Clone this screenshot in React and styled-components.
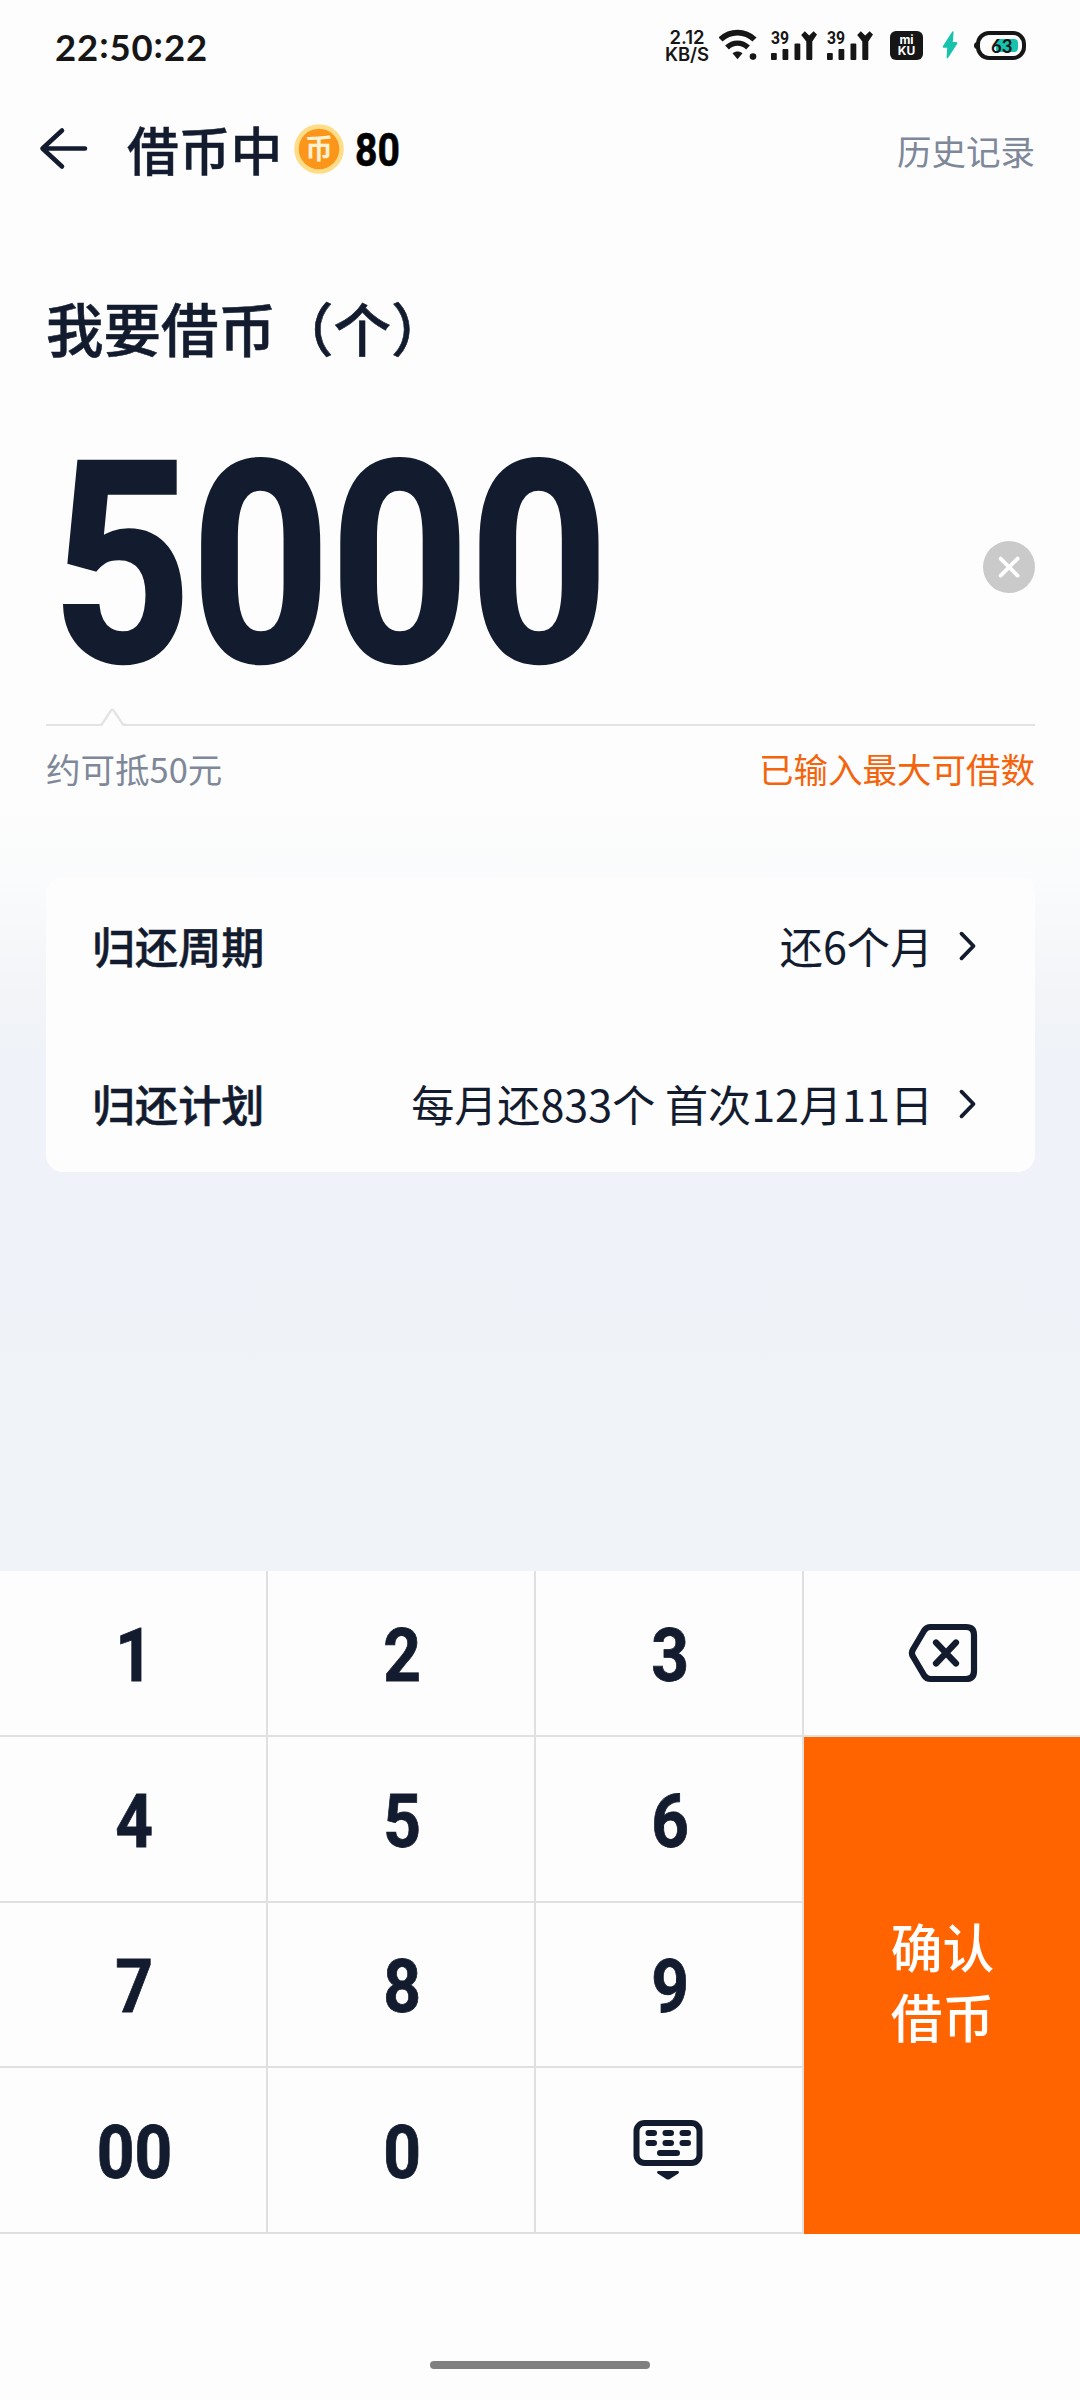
import React, { useState } from "react";
import styled, { createGlobalStyle } from "styled-components";

const INK = "#131c2f";
const CJK = '"Noto Sans CJK SC", "Noto Sans", sans-serif';
const DIGITS = 'Roboto, "Noto Sans", sans-serif';

const ROWS = [
    { label: "归还周期", value: "还6个月" },
    { label: "归还计划", value: "每月还833个 首次12月11日" },
];

const MAX_AMOUNT = 5000;

const SignalIcon = () => (
    <Signal>
        <svg width="46" height="32" viewBox="0 0 46 32" fill="#161616">
            <rect x="0" y="24" width="5.8" height="7" rx="1" />
            <rect x="11.5" y="20" width="5.8" height="11" rx="1" />
            <rect x="23.5" y="14.5" width="5.8" height="16.5" rx="1" />
            <path d="M35.3 30V12.5L30.2 6L33.8 2.2L38.2 6.4L42.6 2.2L46 5.6L41.3 12.5V30a1 1 0 0 1-1 1h-4a1 1 0 0 1-1-1z" />
        </svg>
        <SignalLabel>39</SignalLabel>
    </Signal>
);

const WifiIcon = () => (
    <svg width="40" height="32" viewBox="0 0 40 32" fill="none" stroke="#161616">
        <path d="M1.5 10.5C11 1.2 26 1.2 35.5 10.5" strokeWidth="5.8" />
        <path d="M8 18.5C14 12.6 23 12.6 29 18.5" strokeWidth="5.4" />
        <path d="M13.5 24.2C16.5 21.8 20.5 21.8 23.5 24.2L18.5 30.3z" fill="#161616" stroke="none" />
        <circle cx="34" cy="27.6" r="3.3" fill="#161616" stroke="none" />
    </svg>
);

const CoinIcon = () => (
    <svg width="50" height="50" viewBox="0 0 50 50">
        <circle cx="25" cy="25" r="24.8" fill="#ffdd88" />
        <circle cx="25" cy="25" r="20.3" fill="#fb961a" />
        <text x="25" y="35" textAnchor="middle" fontSize="28" fontWeight="700" fontFamily="Noto Sans CJK SC" fill="#fff1d2">币</text>
    </svg>
);

const BackIcon = () => (
    <svg width="50" height="44" viewBox="0 0 50 44" fill="none" stroke={INK} strokeWidth="4.6" strokeLinecap="round" strokeLinejoin="round">
        <path d="M24 3.5L4.5 21.5L24 39.5M5 21.5H47" />
    </svg>
);

const ClearIcon = () => (
    <svg width="52" height="52" viewBox="0 0 52 52">
        <circle cx="26" cy="26" r="26" fill="#cacaca" />
        <path d="M17.6 17.6L34.6 34.6M34.6 17.6L17.6 34.6" stroke="#fff" strokeWidth="3.8" strokeLinecap="round" />
    </svg>
);

const ChevronIcon = () => (
    <svg width="20" height="32" viewBox="0 0 20 32" fill="none" stroke={INK} strokeWidth="3.8" strokeLinecap="round" strokeLinejoin="round">
        <path d="M3.5 3.7L15.5 16L3.5 28.3" />
    </svg>
);

const DeleteIcon = () => (
    <svg width="70" height="60" viewBox="0 0 70 60" fill="none" stroke={INK} strokeWidth="6.2" strokeLinecap="round" strokeLinejoin="round">
        <path d="M22.5 4H58Q66 4 66 12V48Q66 56 58 56H22.5Q18.5 56 16.2 52.5L5 33.5Q2.8 30 5 26.5L16.2 7.5Q18.5 4 22.5 4z" />
        <path d="M28 19.5L48 40.5M48 19.5L28 40.5" />
    </svg>
);

const KeyboardIcon = () => (
    <svg width="74" height="62" viewBox="0 0 74 62" fill={INK}>
        <rect x="3.5" y="4" width="63" height="40" rx="8" fill="none" stroke={INK} strokeWidth="6" />
        {[12.5, 29.5, 46.5].map((x) => (
            <React.Fragment key={x}>
                <rect x={x} y="11" width="11.5" height="6" rx="3" />
                <rect x={x} y="21" width="11.5" height="6" rx="3" />
            </React.Fragment>
        ))}
        <rect x="24" y="31" width="23" height="6" rx="3" />
        <path d="M25.5 52H44.5Q47 52.5 45.3 54.6L36.4 60.2Q35 61 33.6 60.2L24.7 54.6Q23 52.5 25.5 52z" />
    </svg>
);

const App = () => {
    const [amount, setAmount] = useState("5000");

    // Append a digit, never going above the maximum
    const press = (digit) => {
        const next = Number(amount + digit);
        setAmount(String(Math.min(next, MAX_AMOUNT)));
    };

    return (
        <Screen>
            <GlobalStyle />

            {/* Status bar */}
            <StatusBar>
                <Clock>22<Colon>:</Colon>50<Colon>:</Colon>22</Clock>
                <StatusIcons>
                    <NetSpeed>2.12<br />KB/S</NetSpeed>
                    <WifiIcon />
                    <SignalIcon />
                    <SignalIcon />
                    <AppBadge>mi<br />KU</AppBadge>
                    <svg width="16" height="30" viewBox="0 0 16 30" fill="#17c3ac">
                        <path d="M10.3 2.5L.8 17.2Q.3 18.8 1.8 18.8H5.2L4.6 28.5Q5 30 6.2 28.8L15.2 14.8Q15.8 13.2 14.2 13.1H10.8L11.6 3Q11.2 1.6 10.3 2.5z" />
                    </svg>
                    <Battery>
                        <Charge />
                        <Level>63</Level>
                    </Battery>
                </StatusIcons>
            </StatusBar>

            {/* Header */}
            <Header>
                <BackIcon />
                <Title>借币中</Title>
                <CoinIcon />
                <CoinCount>80</CoinCount>
                <History>历史记录</History>
            </Header>

            {/* Amount */}
            <AmountSection>
                <AmountTitle>我要借币（个）</AmountTitle>
                <AmountRow>
                    <Amount>{amount}</Amount>
                    <PlainButton onClick={() => setAmount("")}>
                        <ClearIcon />
                    </PlainButton>
                </AmountRow>
                <Divider>
                    <Line $width="54px" />
                    <svg width="26" height="19" viewBox="0 0 26 19" fill="none" stroke="#e2e3e4" strokeWidth="2.4">
                        <path d="M0 17.8H1.5L10.6 4.2Q12.3 1 14 4.2L23.2 17.8H26" />
                    </svg>
                    <Line />
                </Divider>
                <Hints>
                    <Hint>约可抵50元</Hint>
                    <Hint $warn>已输入最大可借数</Hint>
                </Hints>
            </AmountSection>

            {/* Repayment card */}
            <Card>
                {ROWS.map((row) => (
                    <CardRow key={row.label}>
                        <RowLabel>{row.label}</RowLabel>
                        <RowValue>{row.value}</RowValue>
                        <ChevronIcon />
                    </CardRow>
                ))}
            </Card>

            {/* Keypad */}
            <Keypad>
                {["1", "2", "3"].map((k) => (
                    <Key key={k} onClick={() => press(k)}><Digit>{k}</Digit></Key>
                ))}
                <Key $last onClick={() => setAmount(amount.slice(0, -1))}>
                    <DeleteIcon />
                </Key>
                {["4", "5", "6"].map((k) => (
                    <Key key={k} onClick={() => press(k)}><Digit>{k}</Digit></Key>
                ))}
                <Confirm>
                    <span>确认</span>
                    <span>借币</span>
                </Confirm>
                {["7", "8", "9", "00", "0"].map((k) => (
                    <Key key={k} onClick={() => press(k)}><Digit>{k}</Digit></Key>
                ))}
                <Key>
                    <KeyboardIcon />
                </Key>
            </Keypad>

            <BottomArea>
                <HomeBar />
            </BottomArea>
        </Screen>
    );
};

const GlobalStyle = createGlobalStyle`
    * {
        box-sizing: border-box;
    }

    body {
        margin: 0;
        background: #fdfdfd;
    }

    svg {
        display: block;
        flex: none;
    }
`;

const Screen = styled.div`
    display: flex;
    flex-direction: column;
    width: 1080px;
    height: 2400px;
    overflow: hidden;
    color: ${INK};
    font-family: ${CJK};
    background: linear-gradient(
        #fdfdfd 0,
        #fdfdfd 780px,
        #fafbfc 880px,
        #f3f5f8 980px,
        #eff2f8 1060px,
        #f0f3f8 1571px
    );
`;

const StatusBar = styled.div`
    display: flex;
    justify-content: space-between;
    height: 94px;
    padding: 29px 54px 0 55px;
    color: #161616;
`;

const Clock = styled.div`
    font: 700 36.5px/36px Lato, sans-serif;
    letter-spacing: 0.9px;
`;

const Colon = styled.span`
    position: relative;
    top: -3px;
`;

const StatusIcons = styled.div`
    display: flex;
    align-items: flex-start;
    height: 34px;
`;

const NetSpeed = styled.div`
    width: 46px;
    margin-right: 9px;
    font: 600 18.5px/16.5px Inter, sans-serif;
    text-align: center;
    white-space: nowrap;
`;

const Signal = styled.div`
    position: relative;
    width: 46px;
    margin-left: 12px;

    & + & {
        margin-left: 10px;
    }
`;

const SignalLabel = styled.span`
    position: absolute;
    top: 1px;
    left: 0;
    font: 700 17.5px/16px Roboto, sans-serif;
    transform: scaleX(0.9);
    transform-origin: left;
`;

const AppBadge = styled.div`
    width: 33px;
    height: 29px;
    margin: 2px 19px 0 17px;
    padding-top: 4px;
    border-radius: 6px;
    background: #161616;
    color: #fff;
    font: 700 12px/10.5px Inter, sans-serif;
    text-align: center;
`;

const Battery = styled.div`
    position: relative;
    display: flex;
    align-items: center;
    justify-content: flex-end;
    width: 50px;
    height: 29px;
    margin: 2px 0 0 18px;
    padding-right: 4px;
    border: 4px solid #161616;
    border-radius: 13px;

    &::before {
        content: "";
        position: absolute;
        left: -6px;
        top: 7px;
        width: 4px;
        height: 7px;
        border-radius: 4px 0 0 4px;
        background: #161616;
    }
`;

const Charge = styled.div`
    width: 22px;
    height: 13px;
    border-radius: 2px 4px 4px 2px;
    background: #17c3ac;
`;

const Level = styled.span`
    position: absolute;
    left: 11px;
    top: 1px;
    font: 700 18.5px/20px Lato, sans-serif;
`;

const Header = styled.header`
    display: flex;
    align-items: center;
    height: 109px;
    padding: 0 45px 0 38px;
`;

const Title = styled.h1`
    margin: 0 12px 0 39px;
    font-size: 51.75px;
    font-weight: 500;
    line-height: 60px;
    -webkit-text-stroke: 0.5px ${INK};
`;

const CoinCount = styled.span`
    margin: 3px 0 0 11px;
    color: #000;
    font: 700 46px/50px ${DIGITS};
    -webkit-text-stroke: 0.6px #000;
    transform: scaleX(0.85);
    transform-origin: left;
`;

const History = styled.span`
    margin: 2px 0 0 auto;
    color: #7e8899;
    font-size: 34.5px;
    line-height: 50px;
`;

const AmountSection = styled.section`
    display: flex;
    flex-direction: column;
    padding: 82px 45px 0 46px;
`;

const AmountTitle = styled.h2`
    margin: 0;
    font-size: 57.5px;
    font-weight: 500;
    line-height: 84px;
    -webkit-text-stroke: 0.6px ${INK};
`;

const AmountRow = styled.div`
    display: flex;
    align-items: center;
    justify-content: space-between;
    height: 280px;
    margin-top: 58px;
`;

const Amount = styled.div`
    margin-left: 6px;
    padding-bottom: 4px;
    font: 700 281px/276px ${DIGITS};
    -webkit-text-stroke: 3px ${INK};
    transform: scaleX(0.863);
    transform-origin: left;
`;

const PlainButton = styled.button`
    padding: 0;
    border: 0;
    background: none;
`;

const Divider = styled.div`
    display: flex;
    align-items: flex-end;
    height: 19px;
`;

const Line = styled.div`
    flex: ${(props) => (props.$width ? "none" : 1)};
    width: ${(props) => props.$width || "auto"};
    height: 2px;
    background: #e2e3e4;
`;

const Hints = styled.div`
    display: flex;
    justify-content: space-between;
    margin-top: 17px;
`;

const Hint = styled.span`
    color: ${(props) => (props.$warn ? "#f4640c" : "#7e8899")};
    font-size: 34.5px;
    line-height: 50px;
`;

const Card = styled.section`
    height: 295px;
    margin: 84px 45px 399px 46px;
    padding: 0 57px 0 46px;
    border-radius: 17px;
    background: #fdfdfd;
`;

const CardRow = styled.div`
    display: flex;
    align-items: center;
    height: 138px;

    & + & {
        margin-top: 20px;
    }
`;

const RowLabel = styled.span`
    flex: 1;
    padding-bottom: 2px;
    font-size: 43.1px;
    font-weight: 500;
    line-height: 58px;
    -webkit-text-stroke: 0.5px ${INK};
`;

const RowValue = styled.span`
    margin-right: 25px;
    padding-bottom: 2px;
    font-size: 43.1px;
    line-height: 58px;
`;

const Keypad = styled.div`
    display: grid;
    grid-template-columns: repeat(3, 268px) 1fr;
    grid-template-rows: 166px 166px 165px 166px;
    background: #fdfdfd;
`;

const Key = styled.button`
    display: flex;
    align-items: center;
    justify-content: center;
    padding: 0 0 0 2px;
    border: 0 solid #e0e0e0;
    border-bottom-width: 2px;
    border-right-width: ${(props) => (props.$last ? 0 : "2px")};
    background: none;
    color: ${INK};
`;

const Digit = styled.span`
    padding-top: 5px;
    font: 700 74px/86px ${DIGITS};
    -webkit-text-stroke: 0.8px ${INK};
    transform: scaleX(0.89);
`;

const Confirm = styled.button`
    grid-row: span 3;
    display: flex;
    flex-direction: column;
    align-items: center;
    justify-content: center;
    padding: 0 0 9px 1px;
    border: 0;
    background: #ff6400;
    color: #fff;
    font: 500 51.75px/70px ${CJK};
`;

const BottomArea = styled.div`
    display: flex;
    flex: 1;
    align-items: flex-end;
    justify-content: center;
    padding-bottom: 31px;
    background: #fdfdfd;
`;

const HomeBar = styled.div`
    width: 220px;
    height: 8px;
    border-radius: 4px;
    background: #808080;
`;

export default App;
